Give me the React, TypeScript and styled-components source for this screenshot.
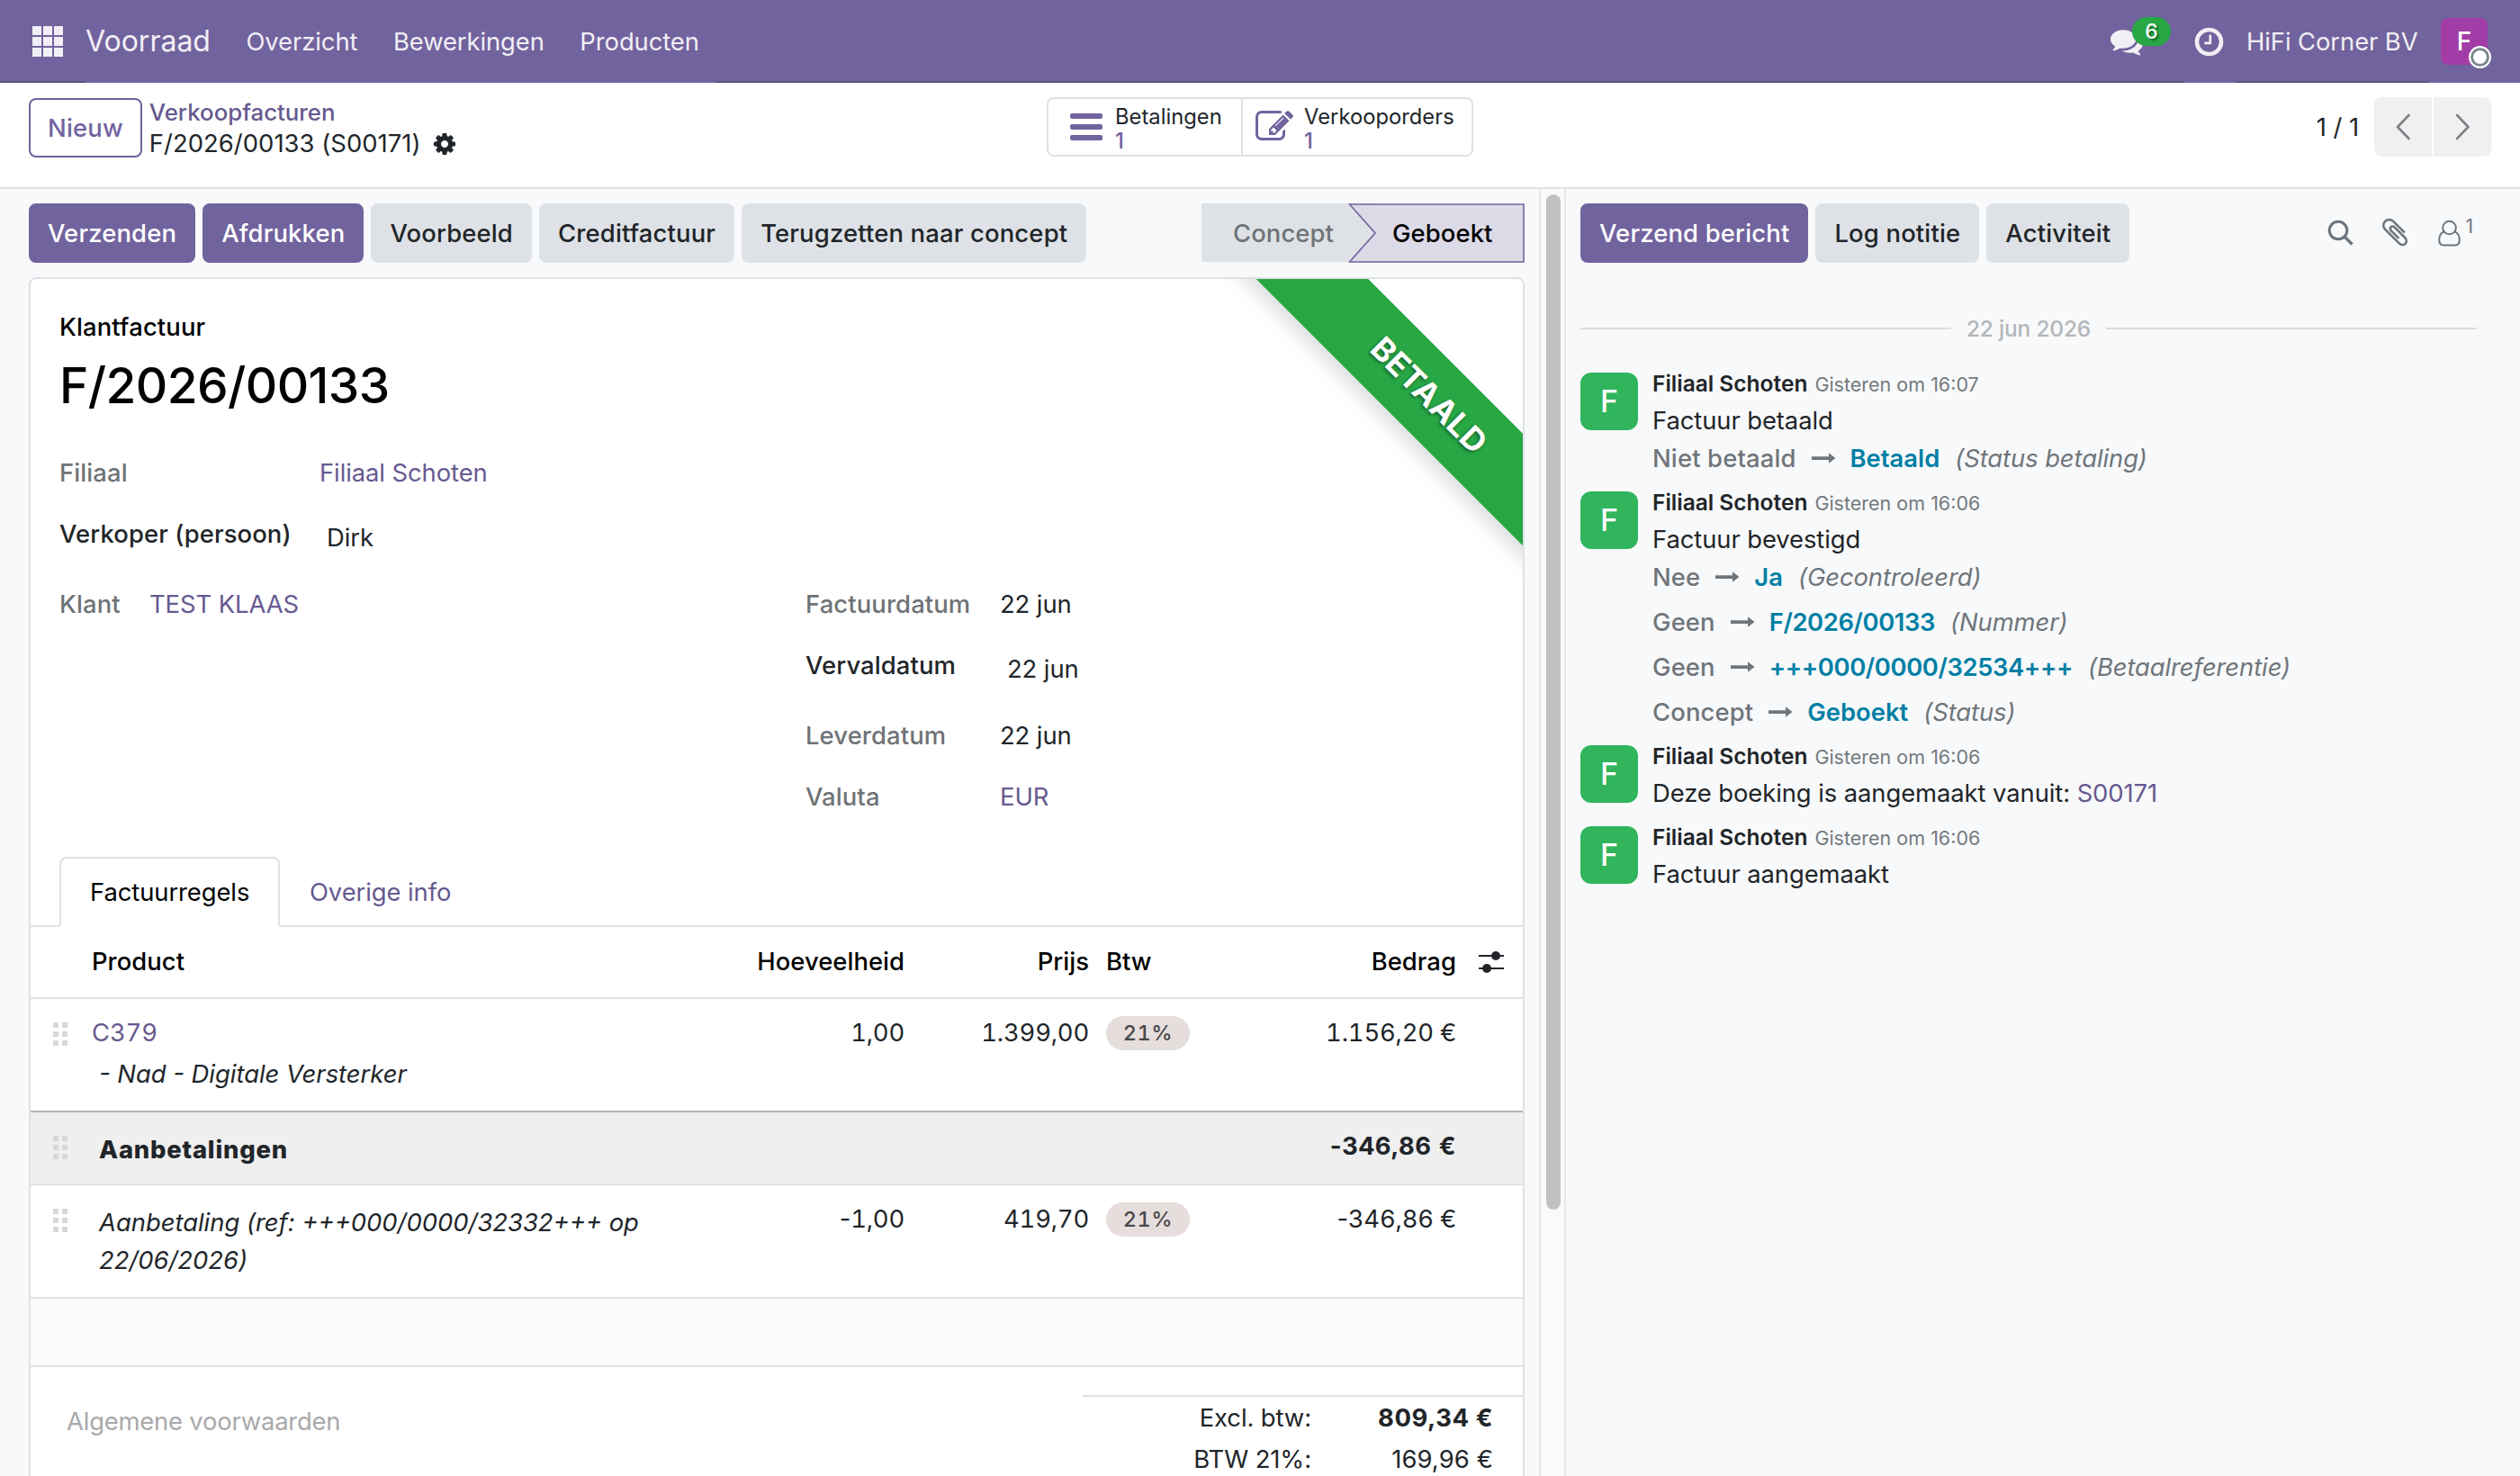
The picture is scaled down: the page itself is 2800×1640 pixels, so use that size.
import React from "react";
import styled, { createGlobalStyle, css } from "styled-components";

const GlobalStyle = createGlobalStyle`
    * {
        box-sizing: border-box;
    }

    body {
        margin: 0;
        background: #f8f9fa;
        color: #212529;
        font-family: Inter, "Liberation Sans", sans-serif;
        font-size: 27.4px;
        letter-spacing: -0.08px;
        line-height: 42px;
        overflow: hidden;
    }
`;

const BRAND = "#71639e";
const LINK = "#66598f";
const BORDER = "#dee2e6";

/* ---------- layout ---------- */

const Page = styled.div`
    display: flex;
    flex-direction: column;
    width: 2800px;
    height: 1640px;
    overflow: hidden;
    white-space: nowrap;
`;

const Body = styled.div`
    display: flex;
    flex: 1;
    min-height: 0;
`;

/* ---------- navbar ---------- */

const Navbar = styled.nav`
    display: flex;
    flex: none;
    height: 92px;
    color: #f1eff5;
    background: linear-gradient(#5a4f7f, #5a4f7f) bottom / 100% 2px no-repeat ${BRAND};
`;

const AppsButton = styled.div`
    display: flex;
    align-items: center;
    width: 95px;
    padding-left: 36px;
`;

const NavSections = styled.div`
    display: flex;
    align-items: center;
    gap: 39.5px;
    width: 701px;
    background: ${BRAND};
`;

const NavBrand = styled.span`
    font-size: 32px;
    letter-spacing: 0;
`;

const Systray = styled.div`
    display: flex;
    margin-left: auto;
`;

const SystrayItem = styled.div<{ $width: number; $inset?: number; $solid?: boolean }>`
    position: relative;
    display: flex;
    align-items: center;
    width: ${(p) => p.$width}px;
    padding-left: ${(p) => p.$inset || 0}px;
    background: ${(p) => (p.$solid ? BRAND : "transparent")};
`;

const Counter = styled.span`
    position: absolute;
    left: 24px;
    top: 19px;
    width: 43px;
    height: 32px;
    border-radius: 16px;
    background: #28a745;
    color: #fff;
    font-size: 23px;
    font-weight: 500;
    line-height: 32px;
    text-align: center;
    text-shadow: 2px 2px 2px rgba(0, 0, 0, 0.4);
`;

const UserAvatar = styled.div`
    position: relative;
    width: 52px;
    height: 52px;
    border-radius: 8px;
    background: #a23da8;
    color: #fff;
    font-size: 28px;
    font-weight: 500;
    line-height: 52px;
    text-align: center;
`;

const Presence = styled.span`
    position: absolute;
    right: -4px;
    bottom: -4px;
    width: 25px;
    height: 25px;
    border: 2px solid #fff;
    border-radius: 50%;
    background: #fff;
    box-shadow: inset 0 0 0 3px #7b868c;
`;

/* ---------- control panel ---------- */

const ControlPanel = styled.header`
    display: grid;
    grid-template-columns: 1131px 1fr auto;
    align-items: start;
    flex: none;
    height: 118px;
    padding: 16px 32px 0;
    border-bottom: 2px solid ${BORDER};
    background: #fff;
`;

const BreadcrumbArea = styled.div`
    display: flex;
    align-items: flex-start;
    gap: 8px;
`;

const Breadcrumb = styled.div`
    margin-top: -1px;
    line-height: 35px;
`;

const BreadcrumbLink = styled.div`
    color: ${LINK};
    font-size: 25.8px;
    font-weight: 500;
    letter-spacing: 0;
`;

const BreadcrumbCurrent = styled.div`
    display: flex;
    align-items: center;
    gap: 14px;
    letter-spacing: 0.05px;
`;

const StatButtons = styled.div`
    display: flex;
    width: 474px;
    height: 66px;
    border: 2px solid ${BORDER};
    border-radius: 8px;
`;

const StatButton = styled.div<{ $width: number; $inset: number; $gap: number }>`
    display: flex;
    align-items: center;
    gap: ${(p) => p.$gap}px;
    width: ${(p) => p.$width}px;
    padding-left: ${(p) => p.$inset}px;

    & + & {
        border-left: 2px solid ${BORDER};
    }
`;

const StatText = styled.div`
    padding-top: 4px;
    font-size: 23.7px;
    letter-spacing: 0.05px;
    line-height: 27px;
`;

const StatValue = styled.div`
    color: ${BRAND};
    font-weight: 500;
`;

const Pager = styled.div`
    display: flex;
    align-items: center;
    gap: 2px;
`;

const PagerText = styled.span`
    margin-right: 15px;
`;

const PagerButton = styled.div<{ $side: "left" | "right" }>`
    display: flex;
    align-items: center;
    justify-content: center;
    width: 64px;
    height: 66px;
    border-radius: ${(p) => (p.$side === "left" ? "8px 0 0 8px" : "0 8px 8px 0")};
    background: #eff0f2;
`;

const Button = styled.button<{ $variant: "primary" | "secondary" | "outline" }>`
    height: 66px;
    padding: 0 19px;
    border: 2px solid transparent;
    border-radius: 8px;
    font: inherit;
    font-weight: 500;
    letter-spacing: 0.18px;
    line-height: 62px;

    ${(p) =>
        p.$variant === "primary" &&
        css`
            background: ${BRAND};
            border-color: ${BRAND};
            color: #fff;
        `}
    ${(p) =>
        p.$variant === "secondary" &&
        css`
            background: ${BORDER};
            border-color: ${BORDER};
            color: #212529;
        `}
    ${(p) =>
        p.$variant === "outline" &&
        css`
            margin-top: 1px;
            background: #fff;
            border-color: ${BRAND};
            color: ${BRAND};
        `}
`;

/* ---------- form ---------- */

const FormColumn = styled.main`
    width: 1712px;
    padding: 16px 16px 0 32px;
    border-right: 2px solid #e3e5e8;
`;

const StatusBar = styled.div`
    display: flex;
    gap: 8px;
    height: 66px;
    margin-bottom: 16px;
`;

const Statuses = styled.div`
    display: flex;
    width: 359px;
    margin-left: auto;
    font-weight: 500;
    letter-spacing: 0.1px;
    line-height: 66px;
`;

const StatusDone = styled.div`
    width: 165px;
    height: 65px;
    padding-left: 35px;
    border-radius: 2px 0 0 2px;
    background: ${BORDER};
    color: #6f7377;
`;

const StatusActive = styled.div`
    position: relative;
    width: 194px;
    padding-left: 47px;
    color: #000;

    svg {
        position: absolute;
        left: -2px;
        top: 0;
    }

    span {
        position: relative;
    }
`;

const Sheet = styled.section`
    position: relative;
    width: 1662px;
    height: 1500px;
    border: 2px solid ${BORDER};
    border-radius: 8px;
    background: #fff;
    overflow: hidden;
`;

const Ribbon = styled.div`
    position: absolute;
    left: 1302px;
    top: 84px;
    width: 500px;
    height: 88px;
    padding-left: 4px;
    background: #28a745;
    box-shadow: 0 10px 20px rgba(0, 0, 0, 0.13);
    color: #fff;
    font-size: 35.5px;
    font-weight: 700;
    letter-spacing: 0.1px;
    line-height: 87px;
    text-align: center;
    text-shadow: 0 2px 4px rgba(0, 0, 0, 0.45);
    transform: rotate(45deg);
`;

const SheetHead = styled.div`
    height: 642px;
    padding: 32px 32px 0;
`;

const MoveType = styled.div`
    color: #000;
    font-weight: 500;
    letter-spacing: 0.15px;
`;

const Title = styled.h1`
    margin: 0 0 32px;
    color: #000;
    font-size: 55px;
    font-weight: 500;
    letter-spacing: -0.6px;
    line-height: 88px;
`;

const Groups = styled.div`
    display: grid;
    grid-template-columns: 829px 1fr;
`;

const Field = styled.div<{ $label: number; $editable?: boolean }>`
    display: grid;
    grid-template-columns: ${(p) => p.$label}px 1fr;
    height: ${(p) => (p.$editable ? 78 : 68)}px;
`;

const FieldLabel = styled.label<{ $strong?: boolean }>`
    color: ${(p) => (p.$strong ? "#212529" : "#6f7377")};
    font-weight: 500;
    letter-spacing: 0.12px;
`;

const FieldValue = styled.span<{ $editable?: boolean; $link?: boolean }>`
    padding: ${(p) => (p.$editable ? "4px 0 0 8px" : 0)};
    color: ${(p) => (p.$link ? LINK : "#212529")};
`;

const Tabs = styled.div`
    display: flex;
    height: 78px;
    padding-left: 32px;
    border-bottom: 2px solid ${BORDER};
`;

const Tab = styled.div<{ $active?: boolean }>`
    height: 78px;
    padding: 0 31px;
    border: 2px solid transparent;
    line-height: 74px;
    color: ${LINK};

    ${(p) =>
        p.$active &&
        css`
            width: 245px;
            padding-left: 32px;
            border-color: ${BORDER};
            border-bottom-color: #fff;
            border-radius: 8px 8px 0 0;
            background: #fff;
            color: #000;
        `}
`;

/* ---------- invoice lines ---------- */

const Lines = styled.div`
    font-variant-numeric: tabular-nums;
`;

const LineRow = styled.div<{ $height: number; $kind?: "head" | "section" | "empty"; $dark?: boolean }>`
    display: grid;
    grid-template-columns: 68px 652px 251px 205px 200px 208px 1fr;
    height: ${(p) => p.$height}px;
    padding-top: ${(p) => (p.$kind === "head" ? 17 : 16)}px;
    border-bottom: 2px solid ${(p) => (p.$dark ? "#b0b5ba" : BORDER)};
    background: ${(p) => (p.$kind === "section" ? "#efefef" : p.$kind === "empty" ? "#fbfbfb" : "#fff")};
    font-weight: ${(p) => (p.$kind === "head" ? 500 : p.$kind === "section" ? 700 : 400)};
    letter-spacing: ${(p) => (p.$kind === "head" ? 0.05 : p.$kind === "section" ? 0.6 : -0.2)}px;
    color: ${(p) => (p.$kind === "head" ? "#000" : "#212529")};
`;

const NumberCell = styled.div`
    text-align: right;
`;

const Minus = styled.span`
    font-variant-numeric: normal;
`;

const TaxCell = styled.div`
    padding-left: 19px;
`;

const HandleCell = styled.div`
    padding: 10px 0 0 25px;
    line-height: 0;
`;

const OptionsCell = styled.div`
    padding: 9px 0 0 25px;
    line-height: 0;
`;

const ProductLink = styled.div`
    margin-bottom: 4px;
    color: ${LINK};
    letter-spacing: -0.1px;
`;

const Description = styled.div<{ $offset?: number }>`
    width: 625px;
    padding-left: 8px;
    padding-top: ${(p) => p.$offset || 0}px;
    font-style: italic;
    font-variant-numeric: normal;
    letter-spacing: 0;
    white-space: normal;
`;

const SectionName = styled.div`
    padding: 4px 0 0 8px;
    font-weight: 800;
    letter-spacing: 0.8px;
`;

const TaxBadge = styled.div`
    width: 93px;
    height: 38px;
    margin-top: 3px;
    border-radius: 19px;
    background: #e6dddd;
    color: #4a4849;
    font-size: 23.5px;
    font-weight: 500;
    letter-spacing: 0.5px;
    line-height: 38px;
    text-align: center;
`;

const SheetFooter = styled.div`
    display: flex;
    justify-content: space-between;
    padding-left: 40px;
`;

const TermsPlaceholder = styled.div`
    padding-top: 39px;
    color: #a8a9ab;
    letter-spacing: -0.2px;
`;

const Totals = styled.div`
    width: 489px;
    margin-top: 31px;
    border-top: 2px solid ${BORDER};
    line-height: 46px;
`;

const TotalRow = styled.div<{ $bold?: boolean }>`
    display: grid;
    grid-template-columns: 254px 202px;
    text-align: right;

    b {
        font-weight: ${(p) => (p.$bold ? 700 : 400)};
        letter-spacing: ${(p) => (p.$bold ? 0.6 : 0.1)}px;
    }
`;

/* ---------- scrollbar ---------- */

const ScrollTrack = styled.div`
    width: 28px;
    padding: 6px 0 0 6px;
    border-right: 2px solid #e8e8e9;
    background: #fafafa;
`;

const ScrollThumb = styled.div`
    width: 16px;
    height: 1128px;
    border-radius: 8px;
    background: #c1c1c1;
`;

/* ---------- chatter ---------- */

const Chatter = styled.aside`
    flex: 1;
    padding: 16px 48px 0 16px;
`;

const ChatterBar = styled.div`
    display: flex;
    gap: 8px;
    height: 66px;
`;

const ChatterTools = styled.div`
    display: flex;
    gap: 30px;
    margin: 14px 4px 0 auto;
    color: #6c757d;
`;

const Followers = styled.div`
    display: flex;
    gap: 6px;
    font-size: 21px;
    line-height: 24px;
`;

const DateSeparator = styled.div`
    display: flex;
    align-items: center;
    gap: 17px;
    margin: 52px 0 24px;
    color: #b3b6b9;
    font-size: 24.5px;
    font-weight: 500;
    letter-spacing: -0.2px;

    &::before,
    &::after {
        content: "";
        flex: 1;
        height: 2px;
        background: #dadde0;
    }
`;

const MessageRow = styled.article`
    display: flex;
    gap: 16px;
    padding-bottom: 12px;
`;

const MessageAvatar = styled.div`
    flex: none;
    width: 64px;
    height: 64px;
    margin-top: 4px;
    border-radius: 12px;
    background: #30b55c;
    color: #fff;
    font-size: 34px;
    font-weight: 500;
    line-height: 63px;
    text-align: center;
`;

const MessageHead = styled.div`
    display: flex;
    align-items: baseline;
    gap: 8px;
    height: 33px;
    margin-bottom: 3px;
    line-height: 33px;
    letter-spacing: 0;
`;

const Author = styled.strong`
    font-size: 24.5px;
    font-weight: 600;
`;

const Timestamp = styled.small`
    color: #74797e;
    font-size: 21.5px;
`;

const InlineLink = styled.a`
    color: ${LINK};
`;

const TrackingRow = styled.div`
    display: flex;
    align-items: center;
    height: 42px;
    color: #6f757b;

    & + & {
        margin-top: 8px;
    }
`;

const OldValue = styled.span`
    font-weight: 500;
    letter-spacing: 0.15px;
`;

const NewValue = styled.span<{ $code: boolean }>`
    margin-right: 17px;
    color: #017fa5;
    font-weight: 600;
    letter-spacing: ${(p) => (p.$code ? -0.4 : 0)}px;
`;

const Arrow = styled.svg`
    margin: 0 16px;
`;

/* ---------- icons ---------- */

const FaIcon = ({ d, size, color = "currentColor" }: { d: string; size: number; color?: string }) => (
    <svg width={size} height={size} viewBox="0 0 1792 1792" fill={color}>
        <path d={d} />
    </svg>
);

const COG =
    "M1024 896q0-106-75-181t-181-75-181 75-75 181 75 181 181 75 181-75 75-181zm512-109v222q0 12-8 23t-20 13l-185 28q-19 54-39 91 35 50 107 138 10 12 10 25t-9 23q-27 37-99 108t-94 71q-12 0-26-9l-138-108q-44 23-91 38-16 136-29 186-7 28-36 28h-222q-14 0-24.5-8.5t-11.500-21.500l-28-184q-49-16-90-37l-141 107q-10 9-25 9-14 0-25-11-126-114-165-168-7-10-7-23 0-12 8-23 15-21 51-66.500t54-70.500q-27-50-41-99l-183-27q-13-2-21-12.500t-8-23.500v-222q0-12 8-23t19-13l186-28q14-46 39-92-40-57-107-138-10-12-10-24 0-10 9-23 26-36 98.500-107.500t94.500-71.500q13 0 26 10l138 107q44-23 91-38 16-136 29-186 7-28 36-28h222q14 0 24.500 8.500t11.500 21.500l28 184q49 16 90 37l142-107q9-9 24-9 13 0 25 10 129 119 165 170 7 8 7 22 0 12-8 23-15 21-51 66.500t-54 70.500q26 50 41 98l183 28q13 2 21 12.500t8 23.500z";
const COMMENTS =
    "M1408 768q0 139-94 257t-256.500 186.500-353.500 68.500q-86 0-176-16-124 88-278 128-36 9-86 16h-3q-11 0-20.500-8t-11.500-21q-1-3-1-6.500t.5-6.500 2-6l2.500-5 3.500-5.500 4-5 4.500-5 4-4.500q5-6 23-25t26-29.500 22.500-29 25-38.500 20.500-44q-124-72-195-177t-71-224q0-139 94-257t256.500-186.500 353.500-68.500 353.500 68.500 256.500 186.500 94 257zm384 256q0 120-71 224.500t-195 176.500q10 24 20.500 44t25 38.500 22.500 29 26 29.500 23 25q1 1 4 4.500t4.500 5 4 5 3.500 5.500l2.500 5 2 6 .5 6.500-1 6.500q-3 14-13 22t-22 7q-50-7-86-16-154-40-278-128-90 16-176 16-271 0-472-132 58 4 88 4 161 0 309-45t264-129q125-92 192-212t67-254q0-77-23-152 129 71 204 178t75 230z";
const CLOCK =
    "M1024 544v448q0 14-9 23t-23 9h-320q-14 0-23-9t-9-23v-64q0-14 9-23t23-9h224v-352q0-14 9-23t23-9h64q14 0 23 9t9 23zm416 352q0-148-73-273t-198-198-273-73-273 73-198 198-73 273 73 273 198 198 273 73 273-73 198-198 73-273zm224 0q0 209-103 385.500t-279.500 279.500-385.500 103-385.500-103-279.500-279.500-103-385.500 103-385.500 279.500-279.500 385.500-103 385.500 103 279.500 279.500 103 385.500z";
const PENCIL_SQUARE =
    "M888 1184l116-116-152-152-116 116v56h96v96h56zm440-720q-16-16-33 1l-350 350q-17 17-1 33t33-1l350-350q17-17 1-33zm80 594v190q0 119-84.500 203.500t-203.500 84.500h-832q-119 0-203.500-84.500t-84.500-203.500v-832q0-119 84.500-203.500t203.500-84.500h832q63 0 117 25 15 7 18 23 3 17-9 29l-49 49q-14 14-32 8-23-6-45-6h-832q-66 0-113 47t-47 113v832q0 66 47 113t113 47h832q66 0 113-47t47-113v-126q0-13 9-22l64-64q15-15 35-7t20 29zm-96-738l288 288-672 672h-288v-288zm444 132l-92 92-288-288 92-92q28-28 68-28t68 28l152 152q28 28 28 68t-28 68z";
const PAPERCLIP =
    "M1596 1385q0 117-79 196t-196 79q-135 0-235-100l-777-776q-113-115-113-271 0-159 110-270t269-111q158 0 273 113l605 606q10 10 10 22 0 16-30.500 46.500t-46.500 30.500q-13 0-23-10l-606-607q-79-77-181-77-106 0-179 75t-73 181q0 105 76 181l776 777q63 63 145 63 64 0 106-42t42-106q0-82-63-145l-581-581q-26-24-60-24-29 0-48 19t-19 48q0 32 25 59l410 410q10 10 10 22 0 16-31 47t-47 31q-12 0-22-10l-410-410q-63-61-63-149 0-82 57-139t139-57q88 0 149 63l581 581q100 98 100 235z";

const AppsIcon = () => (
    <svg width="34" height="34" fill="currentColor">
        {[0, 12, 24].map((y) => [0, 12, 24].map((x) => <rect key={`${x}-${y}`} x={x} y={y} width="10" height="10" />))}
    </svg>
);

const BarsIcon = () => (
    <svg width="36" height="30" fill={BRAND}>
        {[0, 12, 24].map((y) => (
            <rect key={y} y={y} width="36" height="6" rx="2" />
        ))}
    </svg>
);

const ChevronIcon = ({ d }: { d: string }) => (
    <svg width="18" height="30" fill="none" stroke="#7f8285" strokeWidth="2.6" strokeLinecap="round" strokeLinejoin="round">
        <path d={d} />
    </svg>
);

const SearchIcon = () => (
    <svg width="27" height="34" fill="none" stroke="currentColor" strokeWidth="3" overflow="visible">
        <circle cx="12" cy="16" r="9.800" />
        <path d="M19 23l8.500 8.500" strokeWidth="3.400" />
    </svg>
);

const UserIcon = () => (
    <svg width="25" height="34" fill="none" stroke="currentColor" strokeWidth="2">
        <circle cx="12.500" cy="13" r="7.300" />
        <path d="M6.500 17.300C3 18.800 1.200 22 1.200 26.500q0 6 5 6h12.600q5 0 5-6c0-4.500-1.800-7.700-5.300-9.200" />
    </svg>
);

const HandleIcon = () => (
    <svg width="17" height="27" fill="#d5d8dc">
        {[0, 10, 20].map((y) => [0, 10].map((x) => <rect key={`${x}-${y}`} x={x} y={y} width="6" height="6" />))}
    </svg>
);

const SlidersIcon = () => (
    <svg width="28" height="26" fill="#212529">
        <rect y="5" width="28" height="2" />
        <rect y="19" width="28" height="2" />
        <circle cx="19" cy="6" r="5" />
        <circle cx="9" cy="20" r="5" />
    </svg>
);

/* ---------- data ---------- */

type Tracking = { from: string; to: string; field: string };

type Message = {
    time: string;
    body: string;
    link?: string;
    trackings?: Tracking[];
};

const messages: Message[] = [
    {
        time: "16:07",
        body: "Factuur betaald",
        trackings: [{ from: "Niet betaald", to: "Betaald", field: "Status betaling" }],
    },
    {
        time: "16:06",
        body: "Factuur bevestigd",
        trackings: [
            { from: "Nee", to: "Ja", field: "Gecontroleerd" },
            { from: "Geen", to: "F/2026/00133", field: "Nummer" },
            { from: "Geen", to: "+++000/0000/32534+++", field: "Betaalreferentie" },
            { from: "Concept", to: "Geboekt", field: "Status" },
        ],
    },
    { time: "16:06", body: "Deze boeking is aangemaakt vanuit: ", link: "S00171" },
    { time: "16:06", body: "Factuur aangemaakt" },
];

type FieldDef = { label: string; value: string; link?: boolean; editable?: boolean };

const branchFields: FieldDef[] = [
    { label: "Filiaal", value: "Filiaal Schoten", link: true },
    { label: "Verkoper (persoon)", value: "Dirk", editable: true },
];

const dateFields: FieldDef[] = [
    { label: "Factuurdatum", value: "22 jun" },
    { label: "Vervaldatum", value: "22 jun", editable: true },
    { label: "Leverdatum", value: "22 jun" },
    { label: "Valuta", value: "EUR", link: true },
];

const FormField = ({ field, labelWidth }: { field: FieldDef; labelWidth: number }) => (
    <Field $label={labelWidth} $editable={field.editable}>
        <FieldLabel $strong={field.editable}>{field.label}</FieldLabel>
        <FieldValue $editable={field.editable} $link={field.link}>
            {field.value}
        </FieldValue>
    </Field>
);

// the minus keeps its proportional width, only the digits are tabular
const Amount = ({ value }: { value: string }) => (
    <NumberCell>
        {value.startsWith("-") && <Minus>-</Minus>}
        {value.replace("-", "")}
    </NumberCell>
);

const ChatMessage = ({ message }: { message: Message }) => (
    <MessageRow>
        <MessageAvatar>F</MessageAvatar>
        <div>
            <MessageHead>
                <Author>Filiaal Schoten</Author>
                <Timestamp>Gisteren om {message.time}</Timestamp>
            </MessageHead>
            <div>
                {message.body}
                {message.link && <InlineLink>{message.link}</InlineLink>}
            </div>
            {message.trackings?.map((t) => (
                <TrackingRow key={t.field}>
                    <OldValue>{t.from}</OldValue>
                    <Arrow width="28" height="14" viewBox="0 0 28 14" fill="currentColor">
                        <path d="M1 5.200H20V1.200L27.500 7L20 12.800V9H1z" />
                    </Arrow>
                    <NewValue $code={/\d/.test(t.to)}>{t.to}</NewValue>
                    <i>({t.field})</i>
                </TrackingRow>
            ))}
        </div>
    </MessageRow>
);

export default function App() {
    return (
        <Page>
            <GlobalStyle />
            <Navbar>
                <AppsButton>
                    <AppsIcon />
                </AppsButton>
                <NavSections>
                    <NavBrand>Voorraad</NavBrand>
                    <span>Overzicht</span>
                    <span>Bewerkingen</span>
                    <span>Producten</span>
                </NavSections>
                <Systray>
                    <SystrayItem $width={81}>
                        <FaIcon d={COMMENTS} size={36} />
                        <Counter>6</Counter>
                    </SystrayItem>
                    <SystrayItem $width={58} $inset={10} $solid>
                        <FaIcon d={CLOCK} size={37} />
                    </SystrayItem>
                    <SystrayItem $width={215} $inset={12}>
                        HiFi Corner BV
                    </SystrayItem>
                    <SystrayItem $width={101} $inset={13} $solid>
                        <UserAvatar>
                            F<Presence />
                        </UserAvatar>
                    </SystrayItem>
                </Systray>
            </Navbar>

            <ControlPanel>
                <BreadcrumbArea>
                    <Button $variant="outline">Nieuw</Button>
                    <Breadcrumb>
                        <BreadcrumbLink>Verkoopfacturen</BreadcrumbLink>
                        <BreadcrumbCurrent>
                            F/2026/00133 (S00171)
                            <FaIcon d={COG} size={28} />
                        </BreadcrumbCurrent>
                    </Breadcrumb>
                </BreadcrumbArea>
                <StatButtons>
                    <StatButton $width={214} $inset={24} $gap={14}>
                        <BarsIcon />
                        <StatText>
                            Betalingen
                            <StatValue>1</StatValue>
                        </StatText>
                    </StatButton>
                    <StatButton $width={256} $inset={14} $gap={12}>
                        <FaIcon d={PENCIL_SQUARE} size={42} color={BRAND} />
                        <StatText>
                            Verkooporders
                            <StatValue>1</StatValue>
                        </StatText>
                    </StatButton>
                </StatButtons>
                <Pager>
                    <PagerText>1 / 1</PagerText>
                    <PagerButton $side="left">
                        <ChevronIcon d="M15.500 2L3 15L15.500 28" />
                    </PagerButton>
                    <PagerButton $side="right">
                        <ChevronIcon d="M3 2L15.500 15L3 28" />
                    </PagerButton>
                </Pager>
            </ControlPanel>

            <Body>
                <FormColumn>
                    <StatusBar>
                        <Button $variant="primary">Verzenden</Button>
                        <Button $variant="primary">Afdrukken</Button>
                        <Button $variant="secondary">Voorbeeld</Button>
                        <Button $variant="secondary">Creditfactuur</Button>
                        <Button $variant="secondary">Terugzetten naar concept</Button>
                        <Statuses>
                            <StatusDone>Concept</StatusDone>
                            <StatusActive>
                                <svg width="196" height="66">
                                    <path d="M0 0H29V65H0z" fill={BORDER} />
                                    <path d="M1.500 1H195V65H1.500L30 33z" fill="#dddae8" stroke={BRAND} strokeWidth="1.600" />
                                </svg>
                                <span>Geboekt</span>
                            </StatusActive>
                        </Statuses>
                    </StatusBar>

                    <Sheet>
                        <Ribbon>BETAALD</Ribbon>
                        <SheetHead>
                            <MoveType>Klantfactuur</MoveType>
                            <Title>F/2026/00133</Title>
                            {branchFields.map((f) => (
                                <FormField key={f.label} field={f} labelWidth={289} />
                            ))}
                            <Groups>
                                <FormField field={{ label: "Klant", value: "TEST KLAAS", link: true }} labelWidth={100} />
                                <div>
                                    {dateFields.map((f) => (
                                        <FormField key={f.label} field={f} labelWidth={216} />
                                    ))}
                                </div>
                            </Groups>
                        </SheetHead>

                        <Tabs>
                            <Tab $active>Factuurregels</Tab>
                            <Tab>Overige info</Tab>
                        </Tabs>

                        <Lines>
                            <LineRow $height={80} $kind="head">
                                <div />
                                <div>Product</div>
                                <NumberCell>Hoeveelheid</NumberCell>
                                <NumberCell>Prijs</NumberCell>
                                <TaxCell>Btw</TaxCell>
                                <NumberCell>Bedrag</NumberCell>
                                <OptionsCell>
                                    <SlidersIcon />
                                </OptionsCell>
                            </LineRow>
                            <LineRow $height={126} $dark>
                                <HandleCell>
                                    <HandleIcon />
                                </HandleCell>
                                <div>
                                    <ProductLink>C379</ProductLink>
                                    <Description>- Nad - Digitale Versterker</Description>
                                </div>
                                <Amount value="1,00" />
                                <Amount value="1.399,00" />
                                <TaxCell>
                                    <TaxBadge>21%</TaxBadge>
                                </TaxCell>
                                <Amount value="1.156,20 €" />
                            </LineRow>
                            <LineRow $height={81} $kind="section">
                                <HandleCell>
                                    <HandleIcon />
                                </HandleCell>
                                <SectionName>Aanbetalingen</SectionName>
                                <div />
                                <div />
                                <div />
                                <Amount value="-346,86 €" />
                            </LineRow>
                            <LineRow $height={126}>
                                <HandleCell>
                                    <HandleIcon />
                                </HandleCell>
                                <Description $offset={4}>Aanbetaling (ref: +++000/0000/32332+++ op 22/06/2026)</Description>
                                <Amount value="-1,00" />
                                <Amount value="419,70" />
                                <TaxCell>
                                    <TaxBadge>21%</TaxBadge>
                                </TaxCell>
                                <Amount value="-346,86 €" />
                            </LineRow>
                            <LineRow $height={76} $kind="empty" />
                        </Lines>

                        <SheetFooter>
                            <TermsPlaceholder>Algemene voorwaarden</TermsPlaceholder>
                            <Totals>
                                <TotalRow $bold>
                                    <span>Excl. btw:</span>
                                    <b>809,34 €</b>
                                </TotalRow>
                                <TotalRow>
                                    <span>BTW 21%:</span>
                                    <b>169,96 €</b>
                                </TotalRow>
                            </Totals>
                        </SheetFooter>
                    </Sheet>
                </FormColumn>

                <ScrollTrack>
                    <ScrollThumb />
                </ScrollTrack>

                <Chatter>
                    <ChatterBar>
                        <Button $variant="primary">Verzend bericht</Button>
                        <Button $variant="secondary">Log notitie</Button>
                        <Button $variant="secondary">Activiteit</Button>
                        <ChatterTools>
                            <SearchIcon />
                            <FaIcon d={PAPERCLIP} size={36} />
                            <Followers>
                                <UserIcon />1
                            </Followers>
                        </ChatterTools>
                    </ChatterBar>
                    <DateSeparator>22 jun 2026</DateSeparator>
                    {messages.map((m, i) => (
                        <ChatMessage key={i} message={m} />
                    ))}
                </Chatter>
            </Body>
        </Page>
    );
}
